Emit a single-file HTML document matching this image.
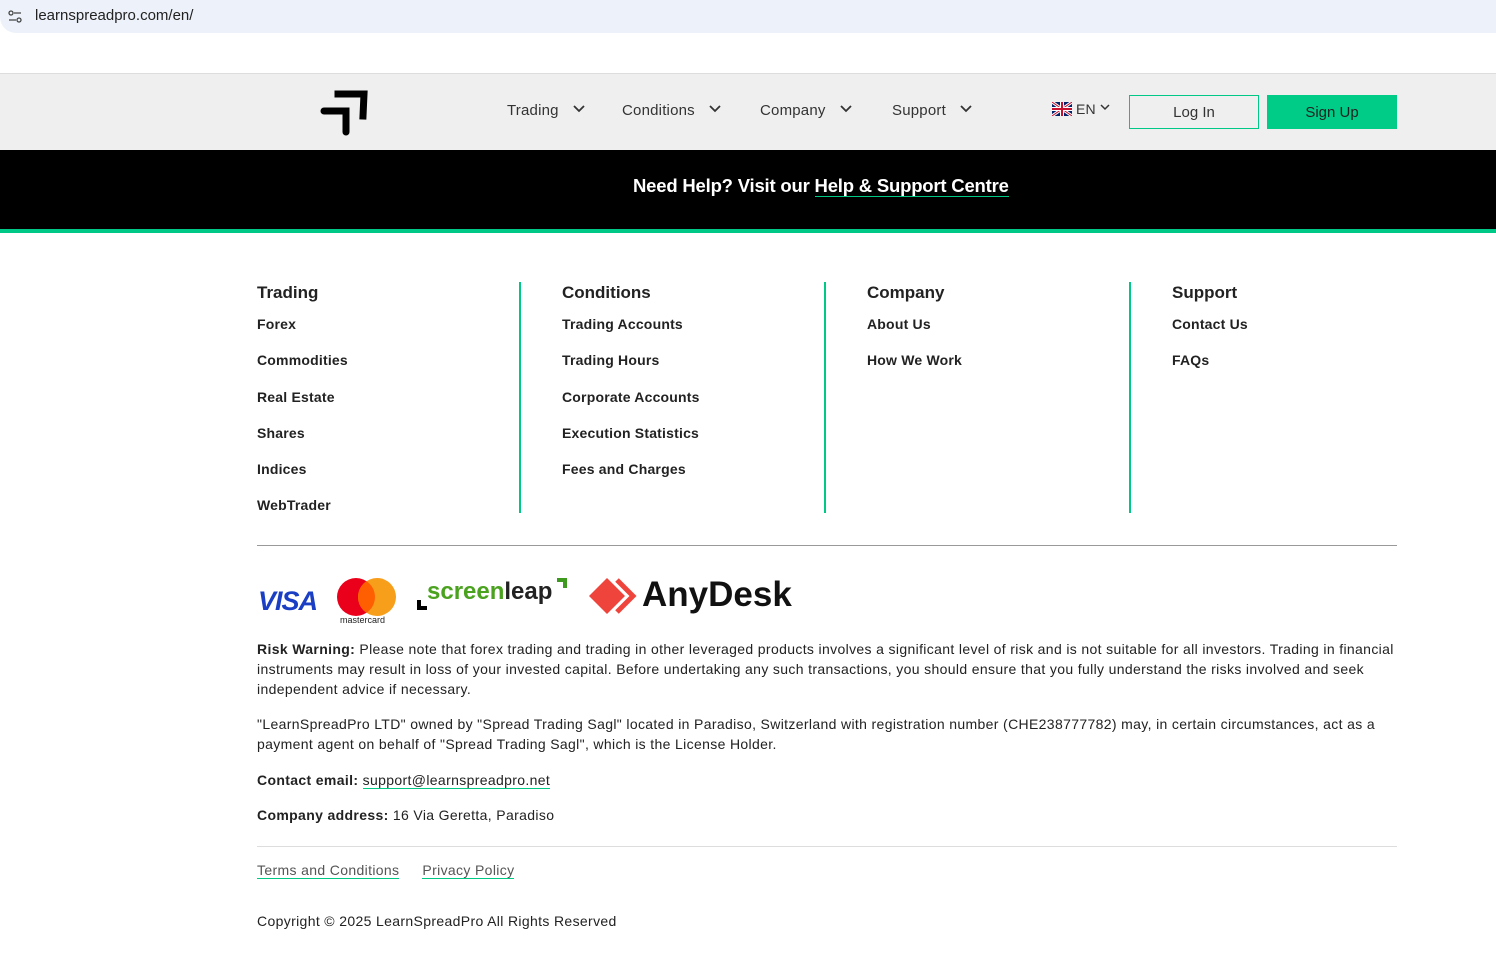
<!DOCTYPE html>
<html><head><meta charset="utf-8"><style>
*{margin:0;padding:0;box-sizing:border-box}
body{width:1496px;height:962px;background:#fff;font-family:"Liberation Sans",sans-serif;color:#222;position:relative;overflow:hidden}
.a{position:absolute}
.bar{top:0;left:0;width:1496px;height:33px;background:#edf2fa;border-radius:0 0 0 16px}
.hdr{top:73px;left:0;width:1496px;height:77px;background:#efefef;border-top:1px solid #ddd}
.nav{font-size:15px;color:#333;letter-spacing:0.2px}
.nav svg{margin-left:14px;vertical-align:2px}
.blk{top:150px;left:0;width:1496px;height:83px;background:#000;border-bottom:4px solid #00c987}
.col h3{font-size:17px;font-weight:bold;color:#222;margin-bottom:13px}
.col div{font-size:14px;font-weight:bold;color:#222;height:36.3px;letter-spacing:0.2px}
.vl{width:2px;background:#00c987;top:282px;height:231px}
p.t{font-size:14px;line-height:20px;color:#222;letter-spacing:0.35px}
</style></head><body>
<div class="a bar"></div>
<svg class="a" style="left:8px;top:10px" width="14" height="13" viewBox="0 0 14 13" fill="none" stroke="#444" stroke-width="1.3"><circle cx="3" cy="3" r="2"/><path d="M6 3H13M1 10H8"/><circle cx="11" cy="10" r="2"/></svg>
<div class="a" style="left:35px;top:7px;font-size:15px;color:#222">learnspreadpro.com/en/</div>
<div class="a hdr"></div>
<svg class="a" style="left:320px;top:90px" width="48" height="46" viewBox="0 0 48 46"><path d="M4 21 L26 21 L26 42" stroke="#000" stroke-width="7" fill="none" stroke-linecap="round"/><path d="M18 4 L44 4 L43 26" stroke="#000" stroke-width="7" fill="none" stroke-linecap="square"/></svg>
<div class="a nav" style="left:507px;top:102px">Trading<svg width="12" height="8"><path d="M1 1L6 6L11 1" stroke="#333" stroke-width="1.8" fill="none"/></svg></div>
<div class="a nav" style="left:622px;top:102px">Conditions<svg width="12" height="8"><path d="M1 1L6 6L11 1" stroke="#333" stroke-width="1.8" fill="none"/></svg></div>
<div class="a nav" style="left:760px;top:102px">Company<svg width="12" height="8"><path d="M1 1L6 6L11 1" stroke="#333" stroke-width="1.8" fill="none"/></svg></div>
<div class="a nav" style="left:892px;top:102px">Support<svg width="12" height="8"><path d="M1 1L6 6L11 1" stroke="#333" stroke-width="1.8" fill="none"/></svg></div>
<svg class="a" style="left:1052px;top:102px" width="20" height="14" viewBox="0 0 20 14"><rect width="20" height="14" fill="#012169"/><path d="M0 0L20 14M20 0L0 14" stroke="#fff" stroke-width="3"/><path d="M0 0L20 14M20 0L0 14" stroke="#c8102e" stroke-width="1"/><path d="M10 0V14M0 7H20" stroke="#fff" stroke-width="4"/><path d="M10 0V14M0 7H20" stroke="#c8102e" stroke-width="2"/></svg>
<div class="a nav" style="left:1076px;top:101px;font-size:14px">EN</div>
<svg class="a" style="left:1100px;top:104px" width="10" height="7"><path d="M1 1L5 5L9 1" stroke="#333" stroke-width="1.5" fill="none"/></svg>
<div class="a" style="left:1129px;top:95px;width:130px;height:34px;border:1px solid #00c987;text-align:center;line-height:33px;font-size:15px;color:#333">Log In</div>
<div class="a" style="left:1267px;top:95px;width:130px;height:34px;background:#00cc88;text-align:center;line-height:35px;font-size:15px;color:#222">Sign Up</div>
<div class="a blk"></div>
<div class="a" style="left:633px;top:175px;font-size:18.5px;font-weight:bold;color:#fff;letter-spacing:-0.2px">Need Help? Visit our <span style="border-bottom:1px solid #00c987">Help &amp; Support Centre</span></div>
<div class="a col" style="left:257px;top:283px"><h3>Trading</h3><div>Forex</div><div>Commodities</div><div>Real Estate</div><div>Shares</div><div>Indices</div><div>WebTrader</div></div>
<div class="a vl" style="left:519px"></div>
<div class="a col" style="left:562px;top:283px"><h3>Conditions</h3><div>Trading Accounts</div><div>Trading Hours</div><div>Corporate Accounts</div><div>Execution Statistics</div><div>Fees and Charges</div></div>
<div class="a vl" style="left:824px"></div>
<div class="a col" style="left:867px;top:283px"><h3>Company</h3><div>About Us</div><div>How We Work</div></div>
<div class="a vl" style="left:1129px"></div>
<div class="a col" style="left:1172px;top:283px"><h3>Support</h3><div>Contact Us</div><div>FAQs</div></div>
<div class="a" style="left:257px;top:545px;width:1140px;height:1px;background:#999"></div>
<div class="a" style="left:258px;top:586px;font-size:27px;font-weight:bold;font-style:italic;color:#1a3fc4;letter-spacing:-1px">VISA</div>
<svg class="a" style="left:336px;top:577px" width="62" height="42"><circle cx="20" cy="20" r="19" fill="#eb001b"/><circle cx="41" cy="20" r="19" fill="#f79e1b"/><path d="M30.5 4.2A19 19 0 0 1 30.5 35.8A19 19 0 0 1 30.5 4.2Z" fill="#ff5f00"/></svg>
<div class="a" style="left:340px;top:615px;font-size:9px;color:#222">mastercard</div>
<div class="a" style="left:417px;top:600px;width:10px;height:10px;border-left:4px solid #000;border-bottom:4px solid #000"></div>
<div class="a" style="left:557px;top:578px;width:10px;height:10px;border-right:4px solid #3d9a1e;border-top:4px solid #3d9a1e"></div>
<div class="a" style="left:427px;top:578px;font-size:24px;font-weight:bold;color:#4aa21f">screen<span style="color:#222">leap</span></div>
<svg class="a" style="left:587px;top:577px" width="52" height="38"><path d="M16 1L34 19L16 37L-2 19Z" fill="#ef443b" transform="translate(4 0)"/><path d="M30 3L46 19L30 35" stroke="#ef443b" stroke-width="5" fill="none"/></svg>
<div class="a" style="left:642px;top:575px;font-size:35px;font-weight:bold;color:#111">AnyDesk</div>
<p class="a t" style="left:257px;top:639px;width:1145px"><b>Risk Warning:</b> Please note that forex trading and trading in other leveraged products involves a significant level of risk and is not suitable for all investors. Trading in financial instruments may result in loss of your invested capital. Before undertaking any such transactions, you should ensure that you fully understand the risks involved and seek independent advice if necessary.</p>
<p class="a t" style="left:257px;top:714px;width:1145px">"LearnSpreadPro LTD" owned by "Spread Trading Sagl" located in Paradiso, Switzerland with registration number (CHE238777782) may, in certain circumstances, act as a payment agent on behalf of "Spread Trading Sagl", which is the License Holder.</p>
<p class="a t" style="left:257px;top:770px"><b>Contact email:</b> <span style="border-bottom:1px solid #00c987">support@learnspreadpro.net</span></p>
<p class="a t" style="left:257px;top:805px"><b>Company address:</b> 16 Via Geretta, Paradiso</p>
<div class="a" style="left:257px;top:846px;width:1140px;height:1px;background:#ddd"></div>
<p class="a t" style="left:257px;top:860px;color:#555"><span style="border-bottom:1px solid #00c987">Terms and Conditions</span><span style="margin-left:23px;border-bottom:1px solid #00c987">Privacy Policy</span></p>
<p class="a t" style="left:257px;top:911px">Copyright © 2025 LearnSpreadPro All Rights Reserved</p>
</body></html>
